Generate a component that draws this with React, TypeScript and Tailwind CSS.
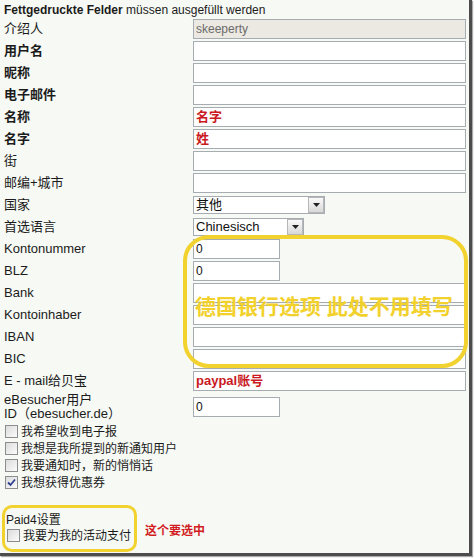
import React from 'react';

// Eingabefeld (einfach, im Stil von alten Windows-Formularen)
const Field = ({ value, tone, width }: { value?: string; tone?: 'grey' | 'red'; width?: string }) => (
  <div
    className={`h-[20px] border border-[#a5acb2] px-[2px] text-[12px] leading-[18px] whitespace-nowrap overflow-hidden ${
      width ?? 'w-[273px]'
    } ${tone === 'grey' ? 'bg-[#ebe9e2] text-[#6b6b6b]' : 'bg-white text-[#111]'} ${
      tone === 'red' ? 'text-[#c9191e] font-bold text-[13px]' : ''
    }`}
  >
    {value}
  </div>
);

const Select = ({ value, width }: { value: string; width: string }) => (
  <div className={`h-[18px] border border-[#a5acb2] bg-white flex items-center justify-between ${width}`}>
    <span className="pl-[2px] text-[13px] leading-[16px] text-[#111]">{value}</span>
    <span className="w-[16px] h-[16px] border border-[#b7b7b7] bg-gradient-to-b from-[#fafafa] to-[#d8d8d8] flex items-center justify-center">
      <svg width="7" height="4" viewBox="0 0 7 4">
        <path d="M0 0 L7 0 L3.5 4 Z" fill="#222" />
      </svg>
    </span>
  </div>
);

const Check = ({ checked }: { checked?: boolean }) => (
  <span className="w-[13px] h-[13px] border border-[#8d8d8d] bg-gradient-to-br from-[#dcdcdc] to-[#fbfbfb] flex items-center justify-center shrink-0">
    {checked && (
      <svg width="9" height="9" viewBox="0 0 9 9">
        <path d="M1 4.5 L3.5 7 L8 1.5" stroke="#2c3f8c" strokeWidth="1.8" fill="none" />
      </svg>
    )}
  </span>
);

const Row = ({ label, bold, children }: { label: React.ReactNode; bold?: boolean; children: React.ReactNode }) => (
  <div className="grid grid-cols-[189px_273px] items-center mb-[2px] min-h-[20px]">
    <div className={`text-[13px] leading-[14px] text-[#1b1b1b] ${bold ? 'font-bold' : ''}`}>{label}</div>
    <div>{children}</div>
  </div>
);

const CheckRow = ({ label, checked }: { label: string; checked?: boolean }) => (
  <div className="h-[17px] flex items-center gap-[3px] pl-[1px] text-[12px] text-[#1b1b1b]">
    <Check checked={checked} />
    <span>{label}</span>
  </div>
);

export default function App() {
  return (
    <div className="w-[474px] h-[558px] bg-white font-['Liberation_Sans','Noto_Sans_CJK_SC',sans-serif]">
      <div className="relative w-[472px] h-[556px] bg-[#f6f9f4] border-r-[3px] border-b-[3px] border-[#4c4c4c] shadow-[1px_1px_1px_#aaa] pl-[4px]">
        {/* Kopfzeile */}
        <div className="h-[19px] pt-[3px] text-[12px] leading-[14px] text-[#1b1b1b]">
          <b>Fettgedruckte Felder</b> müssen ausgefüllt werden
        </div>

        <Row label="介绍人"><Field value="skeeperty" tone="grey" /></Row>
        <Row label="用户名" bold><Field /></Row>
        <Row label="昵称" bold><Field /></Row>
        <Row label="电子邮件" bold><Field /></Row>
        <Row label="名称" bold><Field value="名字" tone="red" /></Row>
        <Row label="名字" bold><Field value="姓" tone="red" /></Row>
        <Row label="街"><Field /></Row>
        <Row label="邮编+城市"><Field /></Row>
        <Row label="国家"><Select value="其他" width="w-[132px]" /></Row>
        <Row label="首选语言"><Select value="Chinesisch" width="w-[111px]" /></Row>
        <Row label="Kontonummer"><Field value="0" width="w-[87px]" /></Row>
        <Row label="BLZ"><Field value="0" width="w-[87px]" /></Row>
        <Row label="Bank"><Field /></Row>
        <Row label="Kontoinhaber"><Field /></Row>
        <Row label="IBAN"><Field /></Row>
        <Row label="BIC"><Field /></Row>
        <Row label="E - mail给贝宝"><Field value="paypal账号" tone="red" /></Row>
        <Row label={<>eBesucher用户<br />ID（ebesucher.de）</>}>
          <Field value="0" width="w-[87px]" />
        </Row>

        {/* Optionen */}
        <div className="mt-[2px]">
          <CheckRow label="我希望收到电子报" />
          <CheckRow label="我想是我所提到的新通知用户" />
          <CheckRow label="我要通知时，新的悄悄话" />
          <CheckRow label="我想获得优惠券" checked />
        </div>

        <div className="mt-[22px] text-[12px] leading-[14px] text-[#1b1b1b]">
          <div className="pl-[2px]">Paid4设置</div>
          <div className="pl-[2px]">
            <CheckRow label="我要为我的活动支付" />
          </div>
        </div>

        {/* Markierungen (Anmerkungen über dem Formular) */}
        <div className="absolute left-[183px] top-[235px] w-[285px] h-[133px] border-[4px] border-[#f1d22e] rounded-[26px]" />
        <div className="absolute left-[195px] top-[294px] text-[21px] leading-[26px] font-bold text-[#f2d12c] whitespace-nowrap">
          德国银行选项 此处不用填写
        </div>
        <div className="absolute left-[2px] top-[505px] w-[135px] h-[47px] border-[3px] border-[#f1d22e] rounded-[10px]" />
        <div className="absolute left-[145px] top-[523px] text-[12px] leading-[16px] font-bold text-[#d21c22]">
          这个要选中
        </div>
      </div>
    </div>
  );
}
